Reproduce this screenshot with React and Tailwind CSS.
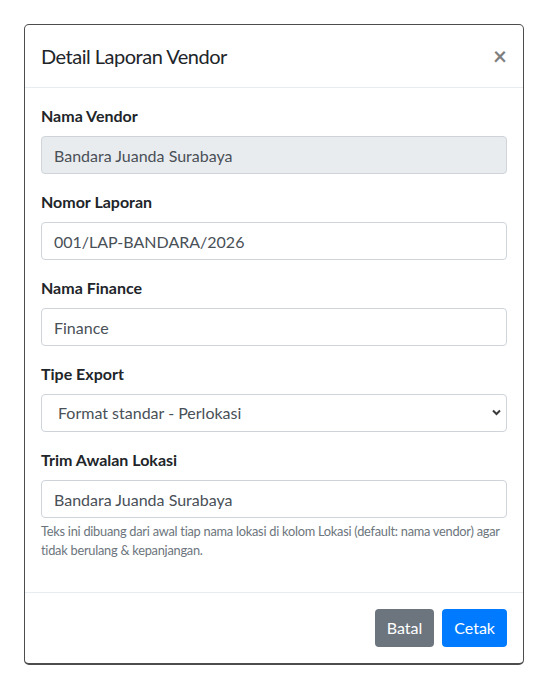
import { useState } from 'react'

function Field({ label, children, help }){
  return (
    <div className="mb-4">
      <label className="block mb-2 font-bold text-[16px] leading-6 text-[#212529]">{label}</label>
      {children}
      {help && <small className="block mt-1 text-[12.8px] leading-[19.2px] tracking-[-0.25px] text-[#6c757d]">{help}</small>}
    </div>
  )
}

export default function App(){
  const [nomor, setNomor] = useState('001/LAP-BANDARA/2026')
  const [finance, setFinance] = useState('Finance')
  const [tipe, setTipe] = useState('perlokasi')
  const [trim, setTrim] = useState('Bandara Juanda Surabaya')

  const inputCls = 'block w-full h-[38px] px-3 py-1.5 text-[16px] leading-6 text-[#495057] border border-[#ced4da] rounded-[4px] outline-none'

  return (
    <div className="min-h-[689px] bg-white pt-6 pl-6" style={{ fontFamily: 'Lato, "Noto Sans", sans-serif' }}>
      <div className="w-[500px] bg-white border border-[#4d4d4d] border-b-2 rounded-[5px]">
        <div className="flex items-start justify-between p-4 border-b border-[#e9ecef]">
          <h5 className="text-[20px] leading-[30px] tracking-[-0.5px] text-[#212529]">Detail Laporan Vendor</h5>
          <button className="-m-4 ml-auto p-4 text-[24px] font-bold leading-[30px] text-black opacity-50">×</button>
        </div>
        <div className="p-4">
          <Field label="Nama Vendor">
            <input className={`${inputCls} bg-[#e9ecef]`} value="Bandara Juanda Surabaya" disabled readOnly />
          </Field>
          <Field label="Nomor Laporan">
            <input className={`${inputCls} bg-white`} value={nomor} onChange={e=> setNomor(e.target.value)} />
          </Field>
          <Field label="Nama Finance">
            <input className={`${inputCls} bg-white`} value={finance} onChange={e=> setFinance(e.target.value)} />
          </Field>
          <Field label="Tipe Export">
            <div className="relative">
              <select className={`${inputCls} bg-white appearance-none pl-4`} value={tipe} onChange={e=> setTipe(e.target.value)}>
                <option value="perlokasi">Format standar - Perlokasi</option>
                <option value="rekap">Format standar - Rekap</option>
              </select>
              <svg className="absolute right-[6px] top-[15px] pointer-events-none" width="9" height="7" viewBox="0 0 9 7">
                <path d="M1 1.5 L4.5 5 L8 1.5" fill="none" stroke="#3a3a3a" strokeWidth="2" />
              </svg>
            </div>
          </Field>
          <Field label="Trim Awalan Lokasi" help="Teks ini dibuang dari awal tiap nama lokasi di kolom Lokasi (default: nama vendor) agar tidak berulang & kepanjangan.">
            <input className={`${inputCls} bg-white`} value={trim} onChange={e=> setTrim(e.target.value)} />
          </Field>
        </div>
        <div className="flex items-center justify-end p-3 border-t border-[#e9ecef]">
          <button className="m-1 h-[38px] px-3 text-[16px] leading-6 text-white bg-[#6c757d] rounded-[4px]">Batal</button>
          <button className="m-1 h-[38px] px-3 text-[16px] leading-6 text-white bg-[#007bff] rounded-[4px]">Cetak</button>
        </div>
      </div>
    </div>
  )
}
